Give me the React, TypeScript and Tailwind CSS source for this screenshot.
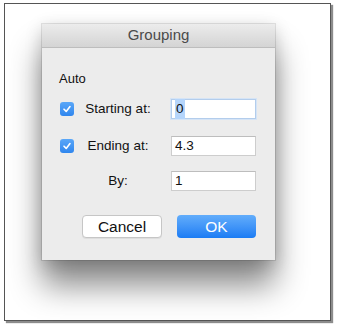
import React from "react";

const font = { fontFamily: '"Liberation Sans", Arial, sans-serif' };

function Check() {
  return (
    <div className="w-[14px] h-[14px] rounded-[3px] bg-gradient-to-b from-[#5aa7f8] to-[#2f86ee] flex items-center justify-center shrink-0">
      <svg width="10" height="10" viewBox="0 0 10 10">
        <path d="M2 5.2 L4.2 7.4 L8 2.6" fill="none" stroke="white" strokeWidth="1.6" strokeLinecap="round" strokeLinejoin="round" />
      </svg>
    </div>
  );
}

function Row({ checked, label, value, focus }: { checked: boolean; label: string; value: string; focus?: boolean }) {
  return (
    <div className="flex items-center h-[20px]">
      <div className="w-[14px] shrink-0">{checked ? <Check /> : null}</div>
      <div className="w-[80px] ml-[4px] text-center text-[13.5px] text-[#111] leading-none">{label}</div>
      <div
        className={
          "ml-[13px] w-[85px] h-[20px] bg-white flex items-center pl-[3px] text-[13.5px] text-[#111] " +
          (focus ? "border border-[#b3cdec] shadow-[0_0_0_1px_#d5e4f6]" : "border border-[#cdcdcd] border-t-[#bdbdbd]")
        }
      >
        {focus ? <span className="bg-[#b5d5fb] px-[1px]">{value}</span> : <span>{value}</span>}
      </div>
    </div>
  );
}

export default function App() {
  return (
    <div className="w-[342px] h-[332px] bg-white pt-[3px] pl-[4px]" style={font}>
      <div className="w-[327px] h-[318px] border border-[#555] shadow-[2px_2px_1px_rgba(0,0,0,0.45)] bg-white pt-[20px] pl-[37px]">
        <div className="w-[233px] bg-[#ececec] shadow-[0_0_0_1px_rgba(0,0,0,0.1),0_26px_30px_rgba(0,0,0,0.45),0_4px_16px_rgba(0,0,0,0.18)]">
          <div className="h-[24px] bg-gradient-to-b from-[#ececec] to-[#d4d4d4] border-b border-[#bdbdbd] flex items-center justify-center text-[15px] text-[#4a4a4a]">
            Grouping
          </div>
          <div className="pl-[18px] pt-[23px] pb-[22px]">
            <div className="h-[16px] flex items-center -ml-[1px] text-[13px] text-[#111]">Auto</div>
            <div className="mt-[12px]">
              <Row checked label="Starting at:" value="0" focus />
            </div>
            <div className="mt-[17px]">
              <Row checked label="Ending at:" value="4.3" />
            </div>
            <div className="mt-[15px]">
              <Row checked={false} label="By:" value="1" />
            </div>
            <div className="mt-[24px] flex ml-[22px]">
              <button className="w-[80px] h-[23px] bg-white border border-[#c6c6c6] rounded-[4px] text-[15.5px] text-[#111] leading-none shadow-[0_1px_0_rgba(0,0,0,0.06)]">
                Cancel
              </button>
              <button className="ml-[15px] w-[79px] h-[23px] rounded-[4px] bg-gradient-to-b from-[#62adfb] to-[#1a7cf4] text-[15.5px] text-white leading-none">
                OK
              </button>
            </div>
          </div>
        </div>
      </div>
    </div>
  );
}
